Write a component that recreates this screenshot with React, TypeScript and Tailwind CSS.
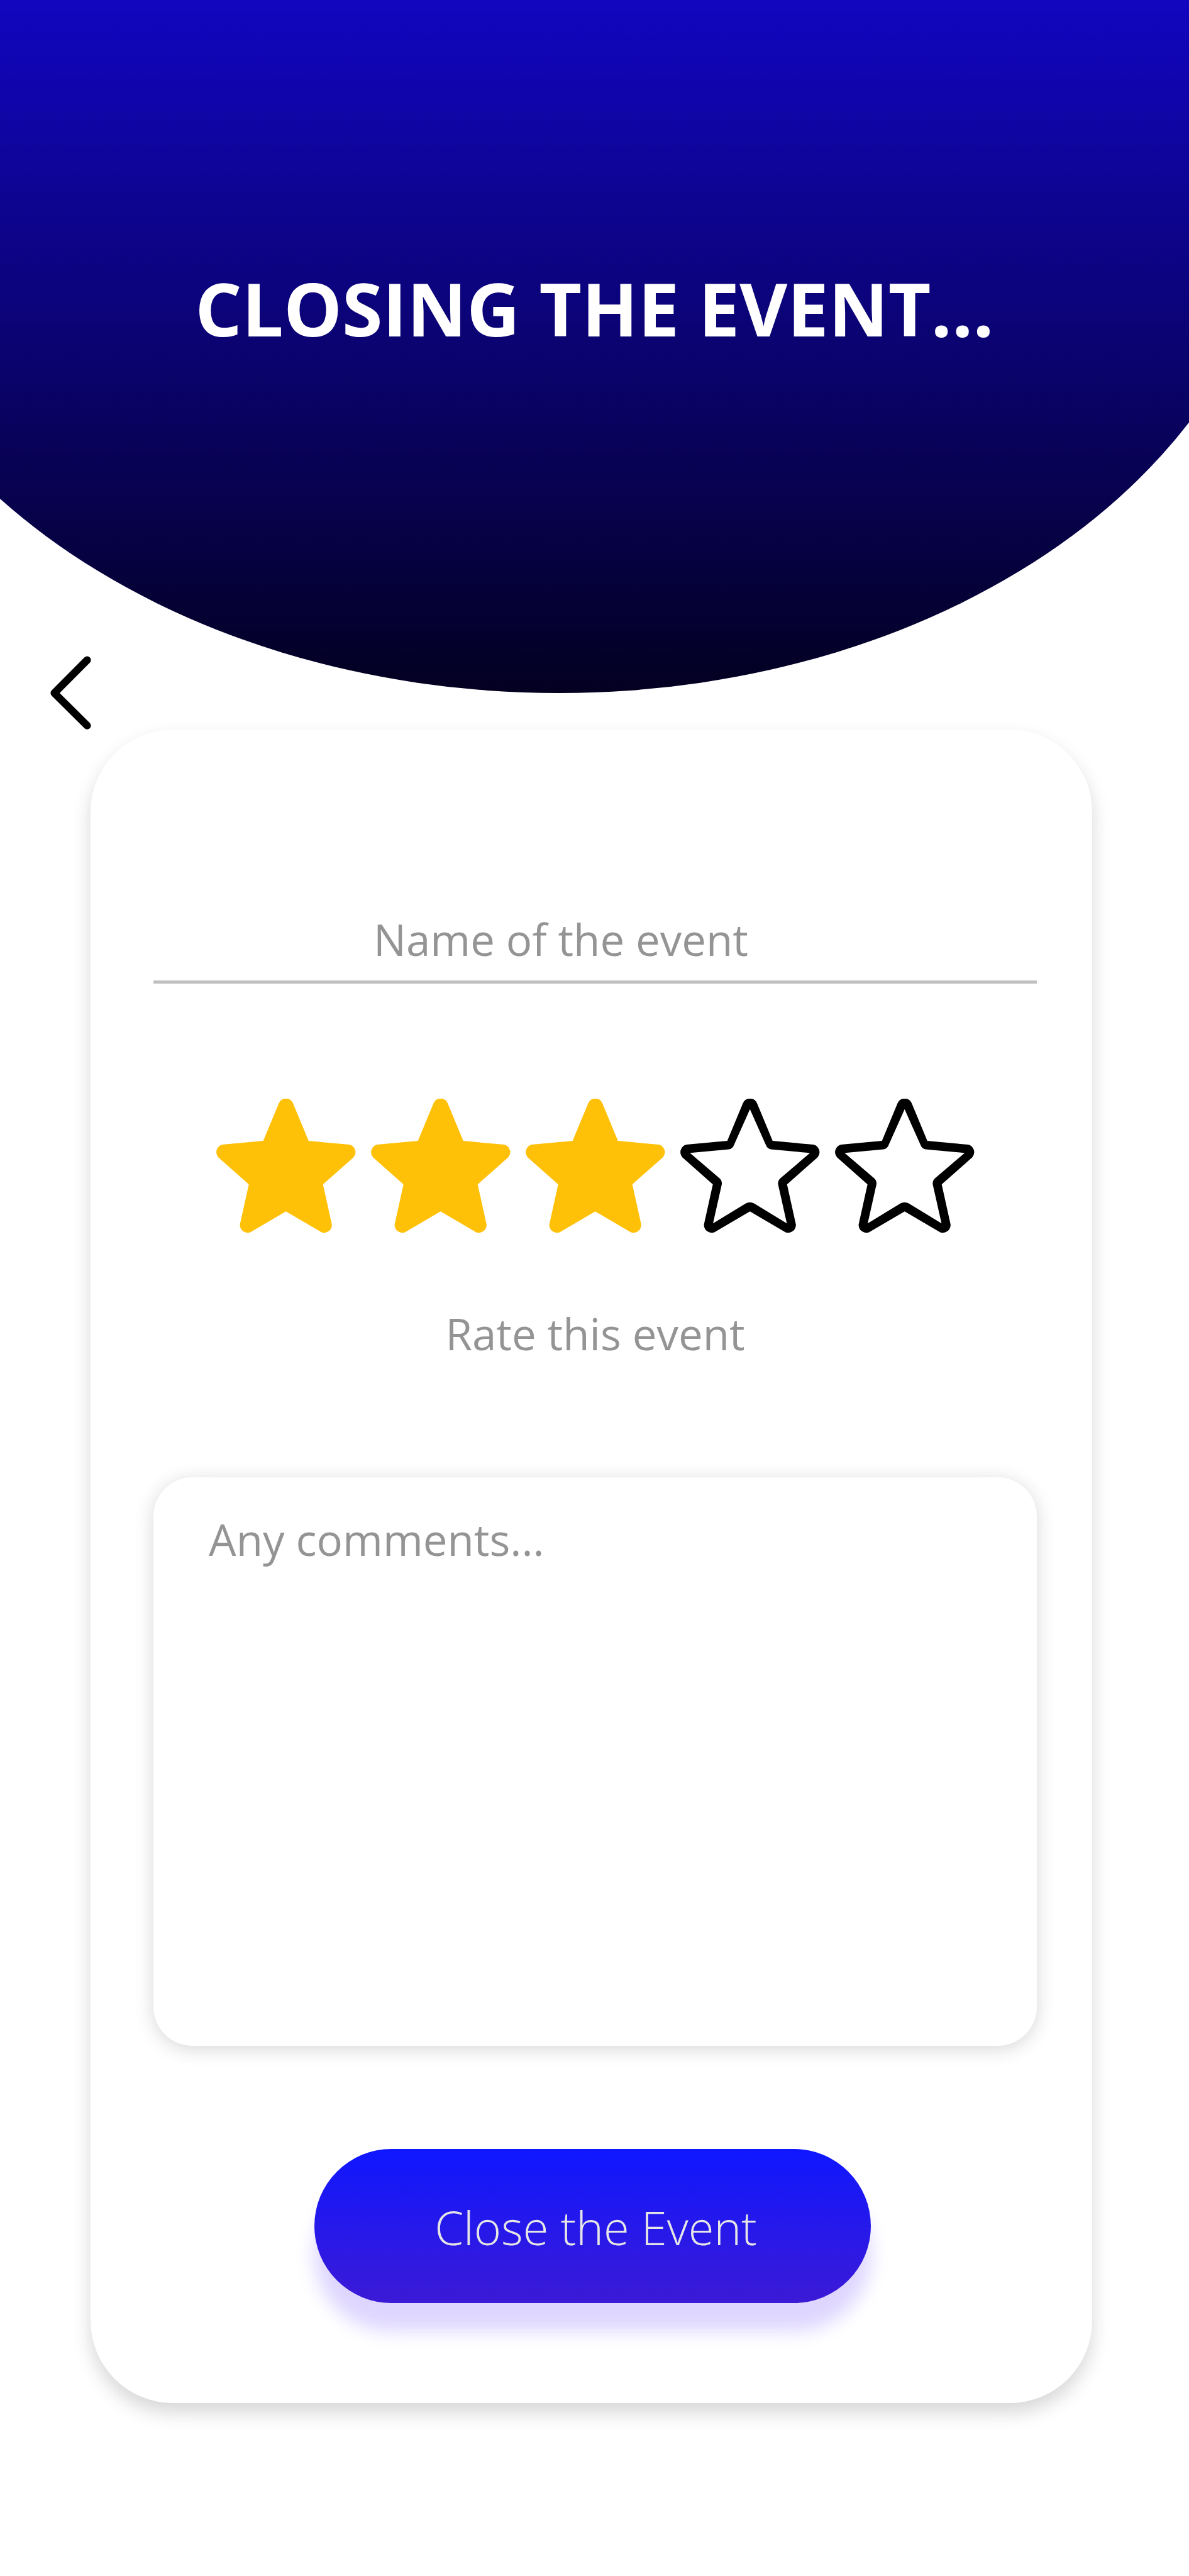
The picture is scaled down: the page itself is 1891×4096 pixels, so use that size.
import { useState } from "react";

const STAR_OUTLINE =
  "M100.6 6.9A12.3 12.3 0 0 1 122.9 6.9L147.8 67.1L212.9 73.1A12.3 12.3 0 0 1 219.3 93.2L170.7 136.2L184.8 200A12.3 12.3 0 0 1 168.4 212.4L111.7 179.2L55 212.4A12.3 12.3 0 0 1 38.6 200L52.7 136.2L4.2 93.2A12.3 12.3 0 0 1 10.6 73.1L75.7 67.1Z";
const STAR_HOLE =
  "M111.7 16.8L86.6 73.1Q84.2 79.8 78.4 80.6L16.3 86.3L63.3 126.6Q68 131.2 66.8 136.8L53 198.2L105.1 166.6Q111.7 163 118.3 166.6L170.4 198.2L156.6 136.8Q155.4 131.2 160.1 126.6L207.2 86.3L145 80.6Q139.2 79.8 136.8 73.1Z";

function Star({ filled }: { filled: boolean }) {
  return (
    <svg viewBox="0 0 223 214" className="block h-[214px] w-[223px]" aria-hidden="true">
      <path
        d={filled ? STAR_OUTLINE : STAR_OUTLINE + STAR_HOLE}
        fill={filled ? "#ffc107" : "#000000"}
        fillRule="evenodd"
      />
    </svg>
  );
}

function Rating() {
  const [rating, setRating] = useState(3);
  return (
    <fieldset aria-labelledby="rate-label" className="mt-[183px] flex justify-center gap-[23px]">
      {[1, 2, 3, 4, 5].map((n) => (
        <label key={n} className="relative cursor-pointer">
          <input
            type="radio"
            name="rating"
            value={n}
            checked={rating === n}
            onChange={() => setRating(n)}
            aria-label={n + " of 5 stars"}
            className="sr-only"
          />
          <Star filled={n <= rating} />
        </label>
      ))}
    </fieldset>
  );
}

export default function App() {
  return (
    <main className="min-h-screen bg-white pb-[274px] font-['Open_Sans','Noto_Sans',sans-serif]">
      <header className="h-[1102px] bg-[linear-gradient(to_bottom,#1206c0,#030020)] pt-[410px] [clip-path:ellipse(61%_852px_at_47%_250px)]">
        <h1 className="text-center text-[117px] leading-[160px] font-bold text-white">
          CLOSING THE EVENT...
        </h1>
      </header>

      <button type="button" aria-label="Back" className="relative ml-[80px] -mt-[59px] block">
        <svg viewBox="0 0 65 117" className="block h-[117px] w-[65px]" aria-hidden="true">
          <path
            d="M58.6 6.4L6.4 58.9L58.6 110.8"
            fill="none"
            stroke="#000000"
            strokeWidth="12"
            strokeLinecap="round"
            strokeLinejoin="round"
          />
        </svg>
      </button>

      <form
        onSubmit={(e) => e.preventDefault()}
        className="mr-[154px] ml-[144px] rounded-[131px] bg-white pt-[267px] pr-[88px] pb-[159px] pl-[100px] shadow-[0_15px_30px_rgba(0,0,0,0.16)]"
      >
        <input
          type="text"
          aria-label="Name of the event"
          placeholder="Name of the event"
          className="block h-[137px] w-full border-b-5 border-[#bfbfbf] bg-transparent pr-[109px] text-center text-[69px] text-[#333333] outline-none placeholder:text-[#949494]"
        />

        <Rating />

        <p id="rate-label" className="mt-[111px] text-center text-[69px] leading-[96px] text-[#949494]">
          Rate this event
        </p>

        <textarea
          aria-label="Comments"
          placeholder="Any comments..."
          className="mt-[181px] block h-[904px] w-full resize-none rounded-[62px] bg-white px-[88px] pt-[50px] text-[69px] leading-[96px] text-[#333333] shadow-[0_5px_30px_rgba(0,0,0,0.16)] outline-none placeholder:text-[#949494]"
        />

        <div className="mt-[164px] flex justify-center pr-2">
          <button
            type="submit"
            className="h-[245px] w-[885px] rounded-full bg-[linear-gradient(to_bottom,#0f17ff,#3c1ad6)] pt-1 pl-[10px] text-[74px] font-light text-[#e6e6e6] shadow-[0_45px_30px_#ded6ff]"
          >
            Close the Event
          </button>
        </div>
      </form>
    </main>
  );
}
